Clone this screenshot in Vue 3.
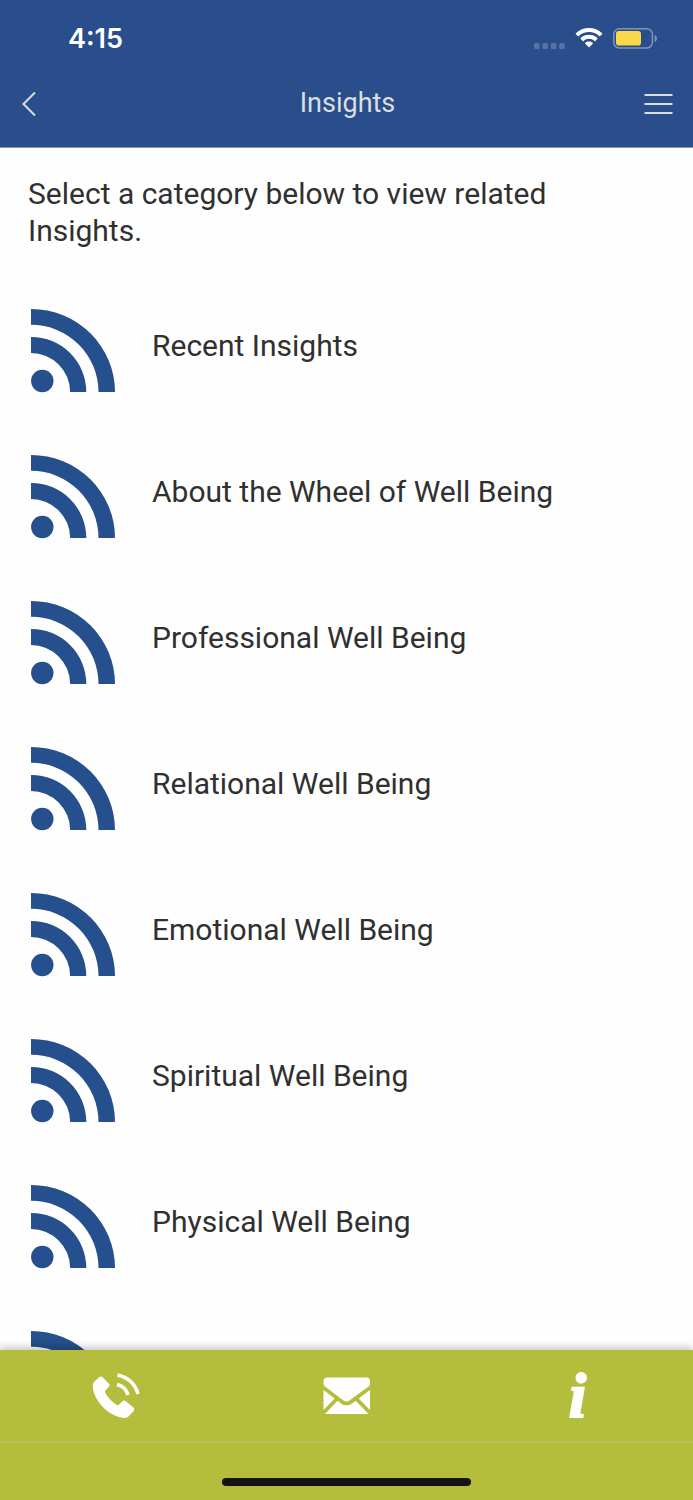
<template>
  <div class="app">
    <header class="header">
      <div class="status-bar">
        <span class="time">4:15</span>
        <div class="status-icons">
          <svg class="signal" width="31" height="6" viewBox="0 0 31 6" aria-hidden="true">
            <rect v-for="n in 4" :key="n" :x="(n - 1) * 8.4" y="0" width="5.6" height="6" rx="1.6" />
          </svg>
          <svg width="28" height="20" viewBox="0 0 28 20" aria-hidden="true">
            <path
              fill="#fff"
              d="M14 0C9 0 4.400 1.900 .900 5.200c-.3.3-.3.700 0 1l1.900 1.900c.3.3.700.3 1 0C6.500 5.500 10.100 4 14 4s7.500 1.500 10.200 4.100c.3.3.700.3 1 0l1.900-1.900c.3-.3.3-.7 0-1C23.600 1.900 19 0 14 0z"
            />
            <path
              fill="#fff"
              d="M14 6.700c-3.200 0-6.100 1.200-8.300 3.200-.3.3-.3.700 0 1l2 2c.3.3.600.3.900 0C10.100 11.600 12 10.800 14 10.800s3.900.8 5.400 2.100c.3.3.600.3.900 0l2-2c.3-.3.3-.7 0-1-2.200-2-5.100-3.200-8.300-3.200z"
            />
            <path
              fill="#fff"
              d="M14 13.400c-1.400 0-2.700.5-3.700 1.400-.3.3-.3.600 0 .9l3.200 3.300c.3.3.7.3 1 0l3.200-3.300c.3-.3.3-.6 0-.9-1-.9-2.300-1.400-3.700-1.400z"
            />
          </svg>
          <svg width="44" height="21" viewBox="0 0 44 21" aria-hidden="true">
            <rect class="battery-case" x=".8" y=".8" width="38.600" height="19.200" rx="5.500" />
            <rect x="3" y="3" width="25" height="14.500" rx="2.800" fill="#f9d84a" />
            <path class="battery-tip" d="M41.700 7c1.500.6 2.300 2 2.300 3.500s-.8 2.900-2.300 3.500z" />
          </svg>
        </div>
      </div>
      <nav class="nav-bar">
        <button class="nav-btn" aria-label="Back">
          <svg width="14" height="26" viewBox="0 0 14 26">
            <path d="M13 1.500L1.500 13 13 24.500" />
          </svg>
        </button>
        <h1 class="title">Insights</h1>
        <button class="nav-btn nav-btn-right" aria-label="Menu">
          <svg width="29" height="20" viewBox="0 0 29 20">
            <path d="M.5 1h28M.5 10h28M.5 19h28" />
          </svg>
        </button>
      </nav>
    </header>

    <main class="content">
      <p class="intro">Select a category below to view related Insights.</p>
      <ul class="categories">
        <li v-for="(category, idx) in categories" :key="idx">
          <a class="category" href="#">
            <svg class="feed-icon" width="96" height="96" viewBox="0 0 96 96" aria-hidden="true">
              <circle cx="14.300" cy="82" r="11.200" />
              <path d="M3 38a55 55 0 0 1 55.300 55H42.200A39.200 39.200 0 0 0 3 54z" />
              <path d="M3 10a84 83 0 0 1 84 83H70.500A67.500 67.200 0 0 0 3 25.800z" />
            </svg>
            <span class="label">{{ category }}</span>
          </a>
        </li>
      </ul>
    </main>

    <footer class="footer">
      <nav class="tabs">
        <a class="tab" href="#" aria-label="Call">
          <svg width="48" height="48" viewBox="0 0 48 48">
            <path
              fill="#fff"
              d="M7 5.200c1.100-.9 2.600-.9 3.600.1l6.100 6.200c1 1 1 2.400 0 3.400L13.500 18.300c-.7.8-.8 1.600-.3 2.500 2.800 4.900 6.500 8.900 11.200 12 .9.6 1.800.5 2.600-.2l3.500-3.400c1-1 2.400-1 3.400 0l7.500 6.400c1.100 1 1.100 2.600.1 3.700l-4.800 4.900c-1.100 1.100-2.700 1.800-4.300 1.700C16 44.500 1.500 28 .7 14.200c-.1-1.900.6-3.500 1.900-4.800z"
            />
            <path class="wave" d="M25 12.500c5.500 1.300 9.500 5 11 10.500" />
            <path class="wave" d="M25.500 3c10.500 2.500 18 9.500 20.500 19" />
          </svg>
        </a>
        <a class="tab" href="#" aria-label="Email">
          <svg width="48" height="38" viewBox="0 0 48 38">
            <g fill="#fff">
              <path d="M4 .5h39.500c2 0 3.500 1.500 3.500 3.500v2.500c0 1.300-.5 2.200-1.500 3L26.500 23.600c-1.800 1.300-4.200 1.300-6 0L2 9.500C1 8.700.5 7.800.5 6.500V4C.5 2 2 .5 4 .5z" />
              <path d="M.5 13l11.200 8.600L.5 33z" />
              <path d="M47 13v20L35.700 21.600z" />
              <path d="M14.500 23.800l4 2.900c3 2.200 7.200 2.200 10.200 0l4-2.900L45.500 37H2z" />
            </g>
          </svg>
        </a>
        <a class="tab info" href="#" aria-label="Information">i</a>
      </nav>
      <div class="home-area">
        <div class="home-indicator"></div>
      </div>
    </footer>
  </div>
</template>

<script setup>
const categories = [
  "Recent Insights",
  "About the Wheel of Well Being",
  "Professional Well Being",
  "Relational Well Being",
  "Emotional Well Being",
  "Spiritual Well Being",
  "Physical Well Being",
  "",
];
</script>

<style>
body {
  margin: 0;
}
</style>

<style scoped>
.app {
  display: flex;
  flex-direction: column;
  height: 100vh;
  background: #fefefe;
  color: #303030;
  font-family: Roboto, "Liberation Sans", sans-serif;
  font-size: 30px;
  line-height: 37px;
}

.header {
  flex: none;
  background: #294e8b;
  border-bottom: 1px solid #7f96bb;
}

.status-bar {
  display: flex;
  align-items: center;
  justify-content: space-between;
  height: 60px;
  padding: 16px 36px 0 68px;
  box-sizing: border-box;
}

.time {
  color: #fff;
  font-family: Inter, sans-serif;
  font-size: 27px;
  font-weight: 600;
}

.status-icons {
  display: flex;
  align-items: center;
  gap: 10px;
}

.signal {
  align-self: flex-end;
  fill: #5773a5;
}

.battery-case {
  fill: none;
  stroke: #7f95b9;
  stroke-width: 1.5;
}

.battery-tip {
  fill: #7f95b9;
}

.nav-bar {
  display: grid;
  grid-template-columns: 1fr auto 1fr;
  align-items: center;
  height: 87px;
  padding: 0 20px 0 22px;
}

.nav-btn {
  display: flex;
  padding: 0;
  border: 0;
  background: none;
  justify-self: start;
}

.nav-btn-right {
  justify-self: end;
}

.nav-btn path {
  fill: none;
  stroke: #dcdfe2;
  stroke-width: 2;
}

.title {
  margin: 0;
  color: #dcdfe2;
  font-size: 27px;
  font-weight: 400;
}

.content {
  flex: 1;
  min-height: 0;
  overflow-y: auto;
  scrollbar-width: none;
}

.intro {
  margin: 0;
  padding: 27px 28px 25px;
}

.categories {
  margin: 0;
  padding: 0;
  list-style: none;
}

.category {
  display: flex;
  align-items: center;
  gap: 28px;
  height: 146px;
  padding: 0 28px;
  color: inherit;
  text-decoration: none;
}

.feed-icon {
  flex: none;
  fill: #264f8d;
}

.label {
  padding-bottom: 4px;
}

.footer {
  position: relative;
  flex: none;
  background: #b5bd3c;
  box-shadow: 0 -2px 8px rgba(0, 0, 0, 0.25);
}

.tabs {
  display: grid;
  grid-template-columns: repeat(3, 1fr);
  height: 91px;
  border-bottom: 2px solid #b9be5e;
}

.tab {
  display: flex;
  align-items: center;
  justify-content: center;
  color: #fff;
  text-decoration: none;
}

.wave {
  fill: none;
  stroke: #fff;
  stroke-width: 3.5;
}

.info {
  padding-top: 2px;
  font-family: "Liberation Serif", serif;
  font-size: 63px;
  font-style: italic;
  font-weight: 700;
  -webkit-text-stroke: 2px #fff;
}

.home-area {
  display: flex;
  align-items: flex-end;
  justify-content: center;
  height: 57px;
  padding-bottom: 14px;
  box-sizing: border-box;
}

.home-indicator {
  width: 36%;
  height: 8px;
  border-radius: 4px;
  background: #141414;
}
</style>
